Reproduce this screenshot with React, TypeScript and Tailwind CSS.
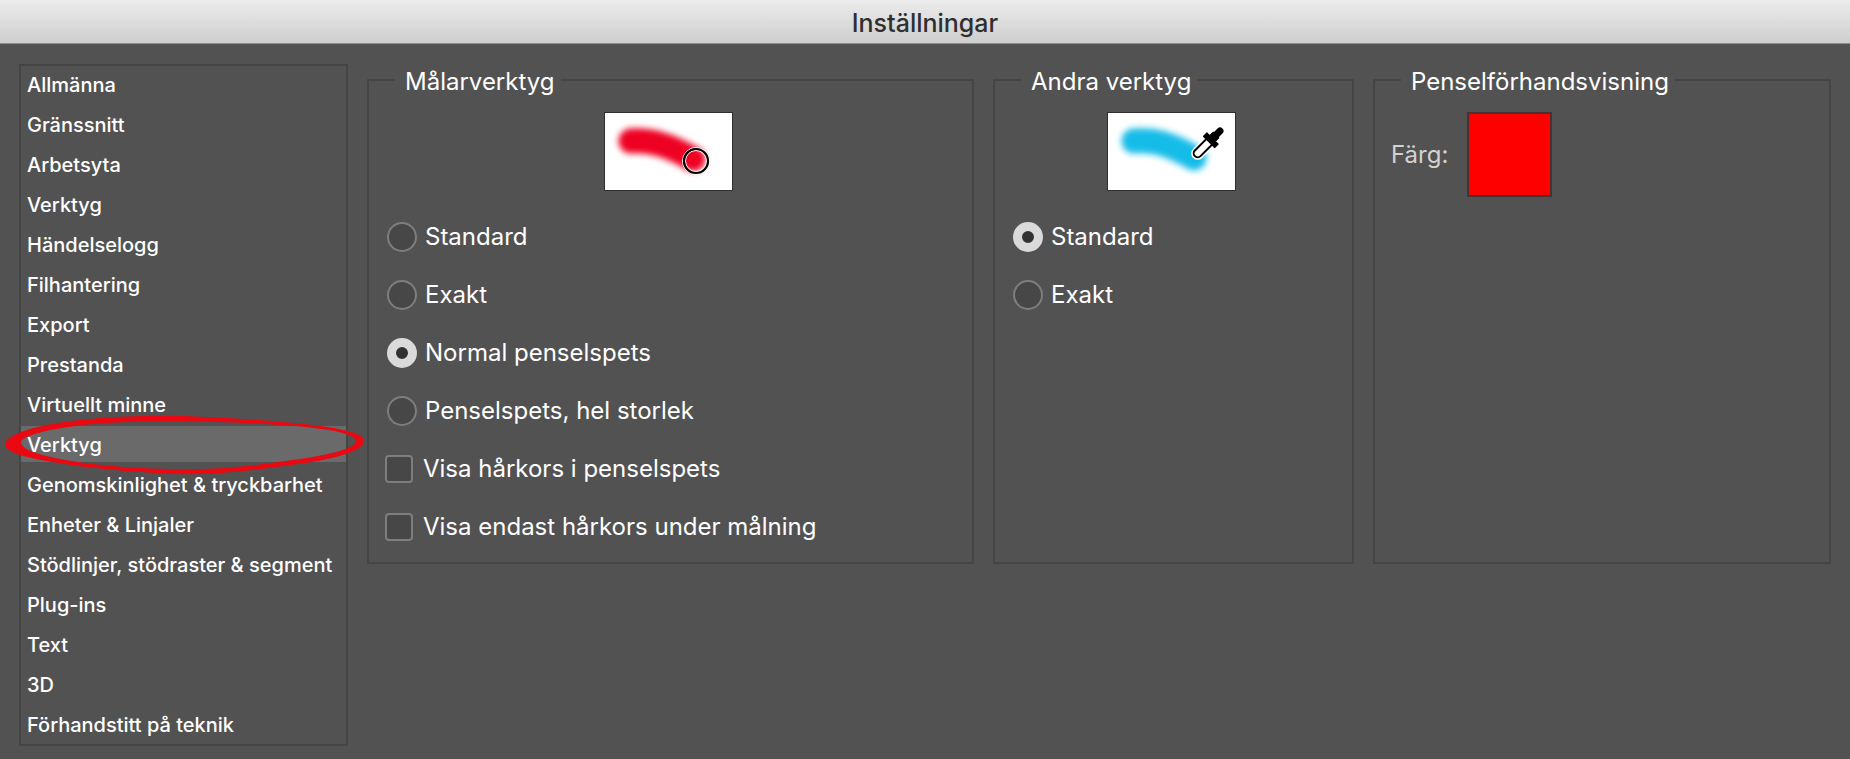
import { useState } from "react";

interface GroupProps {
  title: string;
  children: React.ReactNode;
}

interface RadioOptionProps {
  name: string;
  label: string;
  checked: boolean;
  onChange: () => void;
}

const categories = [
  "Allmänna",
  "Gränssnitt",
  "Arbetsyta",
  "Verktyg",
  "Händelselogg",
  "Filhantering",
  "Export",
  "Prestanda",
  "Virtuellt minne",
  "Verktyg",
  "Genomskinlighet & tryckbarhet",
  "Enheter & Linjaler",
  "Stödlinjer, stödraster & segment",
  "Plug-ins",
  "Text",
  "3D",
  "Förhandstitt på teknik",
];

const paintingCursors = [
  "Standard",
  "Exakt",
  "Normal penselspets",
  "Penselspets, hel storlek",
];

const otherCursors = ["Standard", "Exakt"];

const crosshairOptions = [
  "Visa hårkors i penselspets",
  "Visa endast hårkors under målning",
];

const Group = ({ title, children }: GroupProps) => (
  <fieldset className="min-w-0 border-2 border-[#454545] pt-4 pr-5 pb-1.5 pl-4">
    <legend className="ml-2.5 pt-1 pr-1.5 pl-2.5 text-2xl leading-7 whitespace-nowrap">
      {title}
    </legend>
    {children}
  </fieldset>
);

const RadioOption = ({ name, label, checked, onChange }: RadioOptionProps) => (
  <label className="ml-0.5 flex h-[58px] items-center gap-2 whitespace-nowrap">
    <input
      type="radio"
      name={name}
      checked={checked}
      onChange={onChange}
      className="size-[30px] shrink-0 appearance-none rounded-full border-2 border-[#7e7e7e] bg-[#474747] checked:border-[9px] checked:border-[#dadada] checked:bg-[#323232]"
    />
    {label}
  </label>
);

const CheckOption = ({ label }: { label: string }) => (
  <label className="flex h-[58px] items-center gap-2.5 whitespace-nowrap">
    <input
      type="checkbox"
      className="size-7 shrink-0 appearance-none rounded border-2 border-[#7e7e7e] bg-[#474747] checked:bg-[#dadada]"
    />
    {label}
  </label>
);

const BrushPreview = () => (
  <svg
    className="mx-auto h-[79px] w-[129px] border border-[#2e2e2e] bg-white"
    viewBox="0 0 127 77"
  >
    <defs>
      <filter id="soft-red" filterUnits="userSpaceOnUse" x="0" y="0" width="127" height="77">
        <feGaussianBlur stdDeviation="3.4" />
      </filter>
    </defs>
    <path
      d="M26 28C45 27 62 31 88 46"
      fill="none"
      stroke="#ee0022"
      strokeWidth="25"
      strokeLinecap="round"
      filter="url(#soft-red)"
    />
    <circle cx="91" cy="48" r="13.5" fill="none" stroke="#fff" strokeWidth="1" />
    <circle cx="91" cy="48" r="10.5" fill="none" stroke="#fff" strokeWidth="1" />
    <circle cx="91" cy="48" r="12" fill="none" stroke="#000" strokeWidth="2.2" />
  </svg>
);

const EyedropperPreview = () => (
  <svg
    className="mx-auto h-[79px] w-[129px] border border-[#2e2e2e] bg-white"
    viewBox="0 0 127 77"
  >
    <defs>
      <filter id="soft-blue" filterUnits="userSpaceOnUse" x="0" y="0" width="127" height="77">
        <feGaussianBlur stdDeviation="3.4" />
      </filter>
    </defs>
    <path
      d="M26 28C48 27 62 31 86 45"
      fill="none"
      stroke="#12bce8"
      strokeWidth="25"
      strokeLinecap="round"
      filter="url(#soft-blue)"
    />
    <g transform="translate(89 41) rotate(45)">
      <path
        d="M-4 -21H4V-1A4 4 0 0 1 -4 -1Z"
        fill="#fff"
        stroke="#fff"
        strokeWidth="5"
      />
      <path
        d="M-4 -21H4V-1A4 4 0 0 1 -4 -1Z"
        fill="#fff"
        stroke="#000"
        strokeWidth="2"
      />
      <path d="M-4 -27H4V-22H8V-17H-8V-22H-4Z" fill="#000" stroke="#000" strokeLinejoin="round" />
      <rect x="-3.5" y="-36" width="7" height="13" rx="3.5" fill="#000" />
    </g>
  </svg>
);

const MarkerRing = () => (
  <svg
    className="pointer-events-none absolute -top-3 -left-4 z-10 h-16 w-[360px] max-w-none"
    viewBox="0 0 360 64"
  >
    <path
      fill="#e80912"
      fillRule="evenodd"
      d="M0 30C2 18 48 4 140 2C178 1 232 4 278 8C322 12 360 17 359 27C358 37 332 45 286 51C246 57 206 61 168 60C100 57 34 48 12 40C4 37 0 34 0 30ZM16 28C18 20 60 10 124 8C178 6 250 9 290 12C325 15 351 20 351 27C351 35 320 42 280 47C240 53 205 56 165 55C110 54 60 48 31 39C22 36 16 32 16 28Z"
    />
  </svg>
);

export default function App() {
  const [category, setCategory] = useState(9);
  const [painting, setPainting] = useState(2);
  const [other, setOther] = useState(0);

  return (
    <div className="flex min-h-screen flex-col bg-[#525252] font-['Inter',sans-serif] text-white">
      <header className="flex h-11 items-center justify-center border-b border-[#8f8f8f] bg-linear-to-b from-[#ececec] to-[#cecece] pt-0.5">
        <h1 className="text-[25px] leading-8 font-medium text-[#2f2f2f]">
          Inställningar
        </h1>
      </header>

      <div className="flex flex-1 items-start gap-[19px] px-[19px] pt-5">
        <nav className="flex w-[329px] shrink-0 flex-col gap-1 border-2 border-[#454545] pb-0.5">
          {categories.map((label, index) => (
            <button
              key={index}
              type="button"
              onClick={() => setCategory(index)}
              className={`relative h-9 pt-0.5 pl-1.5 text-left text-xl font-medium whitespace-nowrap ${
                index === category ? "bg-[#6a6a6a]" : ""
              }`}
            >
              {label}
              {index === 9 && <MarkerRing />}
            </button>
          ))}
        </nav>

        <main className="grid min-w-0 flex-1 grid-cols-[607fr_361fr_458fr] gap-[19px] text-2xl">
          <Group title="Målarverktyg">
            <BrushPreview />
            <div className="mt-[17px]">
              {paintingCursors.map((label, index) => (
                <RadioOption
                  key={label}
                  name="painting"
                  label={label}
                  checked={index === painting}
                  onChange={() => setPainting(index)}
                />
              ))}
              {crosshairOptions.map((label) => (
                <CheckOption key={label} label={label} />
              ))}
            </div>
          </Group>

          <Group title="Andra verktyg">
            <EyedropperPreview />
            <div className="mt-[17px]">
              {otherCursors.map((label, index) => (
                <RadioOption
                  key={label}
                  name="other"
                  label={label}
                  checked={index === other}
                  onChange={() => setOther(index)}
                />
              ))}
            </div>
          </Group>

          <Group title="Penselförhandsvisning">
            <div className="flex items-center gap-[19px]">
              <label htmlFor="preview-color" className="text-[#d2d2d2]">
                Färg:
              </label>
              <button
                id="preview-color"
                type="button"
                className="size-[85px] border-2 border-[#4a3030] bg-[#ff0000]"
              />
            </div>
          </Group>
        </main>
      </div>
    </div>
  );
}
